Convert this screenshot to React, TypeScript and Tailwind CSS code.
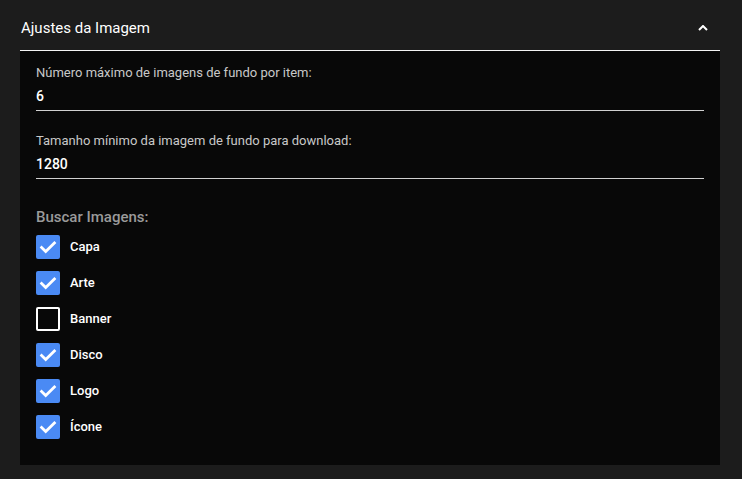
import { useState } from "react";

const options = [
  { key: "capa", label: "Capa", checked: true },
  { key: "arte", label: "Arte", checked: true },
  { key: "banner", label: "Banner", checked: false },
  { key: "disco", label: "Disco", checked: true },
  { key: "logo", label: "Logo", checked: true },
  { key: "icone", label: "Ícone", checked: true },
];

function Field({ label, value }: { label: string; value: string }) {
  return (
    <div className="border-b border-[#d0d0d0] pb-[6px]">
      <p className="text-[13px] leading-[16px] text-[#c8c8c8]">{label}</p>
      <p className="mt-[7px] text-[14px] leading-[16px] font-medium text-white">{value}</p>
    </div>
  );
}

function Check({ checked }: { checked: boolean }) {
  return checked ? (
    <span className="flex size-[24px] shrink-0 items-center justify-center rounded-[2px] bg-[#4a8af4]">
      <svg viewBox="0 0 24 24" className="size-[22px]" fill="none" stroke="white" strokeWidth="3" strokeLinecap="square">
        <path d="M5 12.5l4.5 4.5L19 7.5" />
      </svg>
    </span>
  ) : (
    <span className="block size-[24px] shrink-0 rounded-[2px] border-2 border-white" />
  );
}

export default function App() {
  const [open, setOpen] = useState(true);
  const [state, setState] = useState(options);

  return (
    <div className="min-h-[479px] bg-[#1c1c1c] pl-[20px] pr-[22px] font-['Roboto',sans-serif] text-white">
      <button
        type="button"
        onClick={() => setOpen(!open)}
        className="flex w-full items-center justify-between border-b border-[#f4f4f4] pb-[13px] pl-[1px] pr-[12px] pt-[19px]"
      >
        <span className="text-[15px] leading-[18px]">Ajustes da Imagem</span>
        <svg viewBox="0 0 10 6" className="h-[6px] w-[10px]" fill="none" stroke="white" strokeWidth="2">
          <path d="M1 5l4-4 4 4" />
        </svg>
      </button>
      {open && (
        <div className="bg-[#080808] px-[16px] pb-[26px] pt-[14px]">
          <Field label="Número máximo de imagens de fundo por item:" value="6" />
          <div className="mt-[22px]">
            <Field label="Tamanho mínimo da imagem de fundo para download:" value="1280" />
          </div>
          <p className="mt-[29px] text-[15px] leading-[18px] font-medium text-[#9a9a9a]">Buscar Imagens:</p>
          <div className="mt-[9px] flex flex-col gap-[12px]">
            {state.map((o) => (
              <label key={o.key} className="flex items-center gap-[10px]">
                <button
                  type="button"
                  onClick={() =>
                    setState(state.map((s) => (s.key === o.key ? { ...s, checked: !s.checked } : s)))
                  }
                >
                  <Check checked={o.checked} />
                </button>
                <span className="text-[13px] font-medium">{o.label}</span>
              </label>
            ))}
          </div>
        </div>
      )}
    </div>
  );
}
